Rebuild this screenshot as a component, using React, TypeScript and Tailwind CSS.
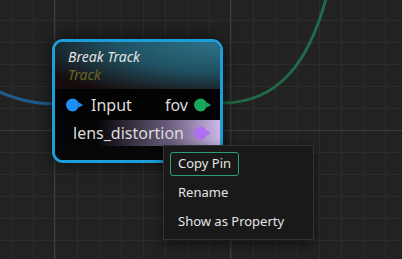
import React from "react";

const minorX = Array.from({ length: 19 }, (_, i) => 11 + i * 22);
const minorY = Array.from({ length: 12 }, (_, i) => 20 + i * 22);

function Pin({ color }: { color: string }) {
  return (
    <svg width="18" height="14" viewBox="0 0 18 14" className="shrink-0">
      <circle cx="6.5" cy="7" r="6.5" fill={color} />
      <path d="M13 4.5 L17 7 L13 9.5 Z" fill={color} />
    </svg>
  );
}

export default function App() {
  return (
    <div className="relative w-[402px] h-[259px] overflow-hidden bg-[#222222] font-['Noto_Sans',sans-serif]">
      {/* canvas grid + wires */}
      <svg className="absolute inset-0" width="402" height="259">
        {minorX.map((x) => (
          <line key={"x" + x} x1={x + 0.5} y1="0" x2={x + 0.5} y2="259" stroke="#2c2c2c" strokeWidth="1" />
        ))}
        {minorY.map((y) => (
          <line key={"y" + y} x1="0" y1={y + 0.5} x2="402" y2={y + 0.5} stroke="#2c2c2c" strokeWidth="1" />
        ))}
        <line x1="54.5" y1="0" x2="54.5" y2="259" stroke="#3b3b3b" strokeWidth="1" />
        <line x1="230.5" y1="0" x2="230.5" y2="259" stroke="#3b3b3b" strokeWidth="1" />
        <line x1="0" y1="130.5" x2="402" y2="130.5" stroke="#3b3b3b" strokeWidth="1" />
        <path d="M -40 75 C 0 92, 20 104, 55 104" fill="none" stroke="#1f5b8c" strokeWidth="3" />
        <path d="M 222 103 C 280 103, 310 60, 327 -5" fill="none" stroke="#1f6a48" strokeWidth="3" />
      </svg>

      {/* node */}
      <div className="absolute left-[52px] top-[39px] w-[171px] h-[124px] rounded-[11px] border-[3px] border-[#1c9fd9] bg-[#080808] overflow-hidden shadow-[0_0_18px_rgba(0,0,0,0.65)] flex flex-col">
        <div className="h-[47px] shrink-0 pl-[13px] pt-[6px] bg-[radial-gradient(ellipse_at_top_right,#2e7387_0%,#1f5162_45%,#170b0b_88%)] flex flex-col">
          <span className="italic text-[14px] leading-[18px] text-[#e2e2e2]">Break Track</span>
          <span className="italic text-[14px] leading-[18px] text-[#6a6426]">Track</span>
        </div>
        <div className="h-[31px] shrink-0 bg-[#030303] flex items-center pl-[11px] pr-[8px]">
          <Pin color="#1f8ff5" />
          <span className="ml-[7px] text-[16px] text-[#dcdcdc]">Input</span>
          <span className="ml-auto mr-[6px] text-[16px] text-[#dcdcdc]">fov</span>
          <Pin color="#17a85a" />
        </div>
        <div className="h-[26px] shrink-0 bg-[linear-gradient(to_right,#050505_25%,#6d5f80_70%,#cdb8e8)] flex items-center pl-[18px] pr-[8px]">
          <span className="text-[16px] text-[#dcdcdc]">lens_distortion</span>
          <span className="ml-auto">
            <Pin color="#b06ff7" />
          </span>
        </div>
        <div className="flex-1 bg-[#070707]" />
      </div>

      {/* context menu */}
      <div className="absolute left-[163px] top-[145px] w-[151px] h-[95px] bg-[#191919] border border-[#333333] px-[6px] pt-[6px] flex flex-col text-[13px] text-[#e4e4e4] shadow-[0_4px_12px_rgba(0,0,0,0.5)]">
        <div className="self-start h-[24px] px-[7px] flex items-center rounded-[3px] border border-[#2f9c80]">Copy Pin</div>
        <div className="mt-[2px] h-[29px] px-[8px] flex items-center">Rename</div>
        <div className="h-[29px] px-[8px] flex items-center">Show as Property</div>
      </div>
    </div>
  );
}
